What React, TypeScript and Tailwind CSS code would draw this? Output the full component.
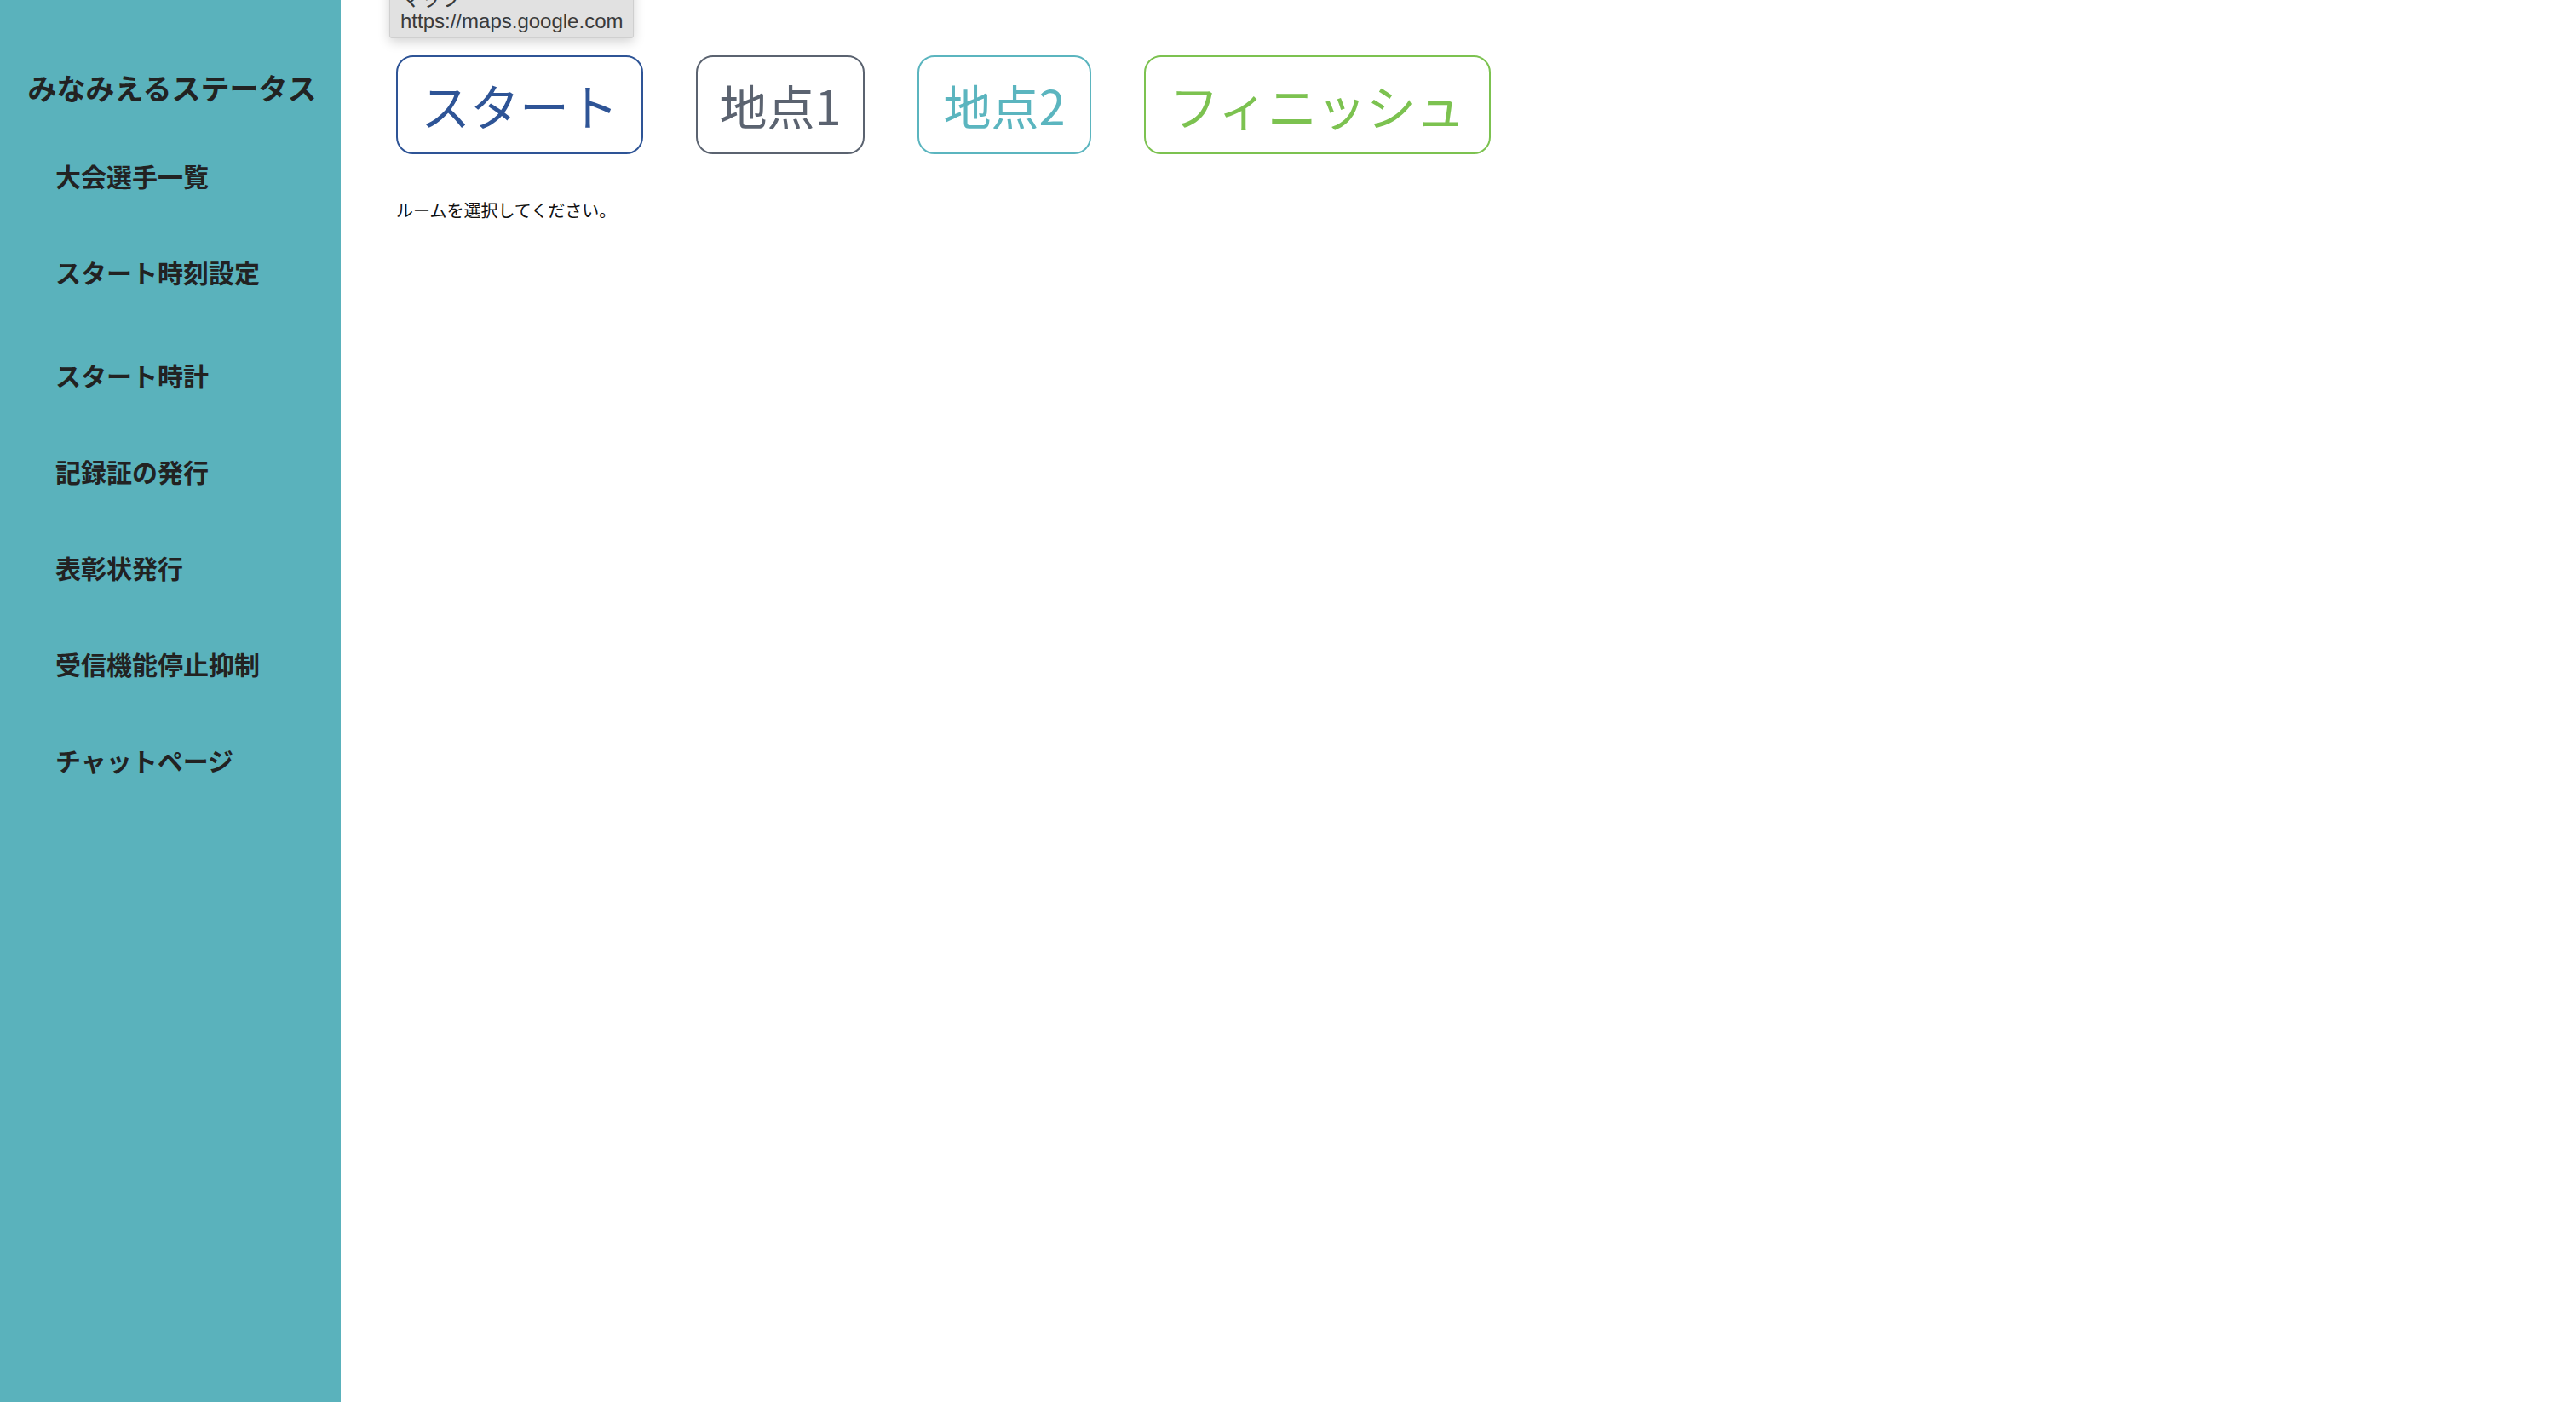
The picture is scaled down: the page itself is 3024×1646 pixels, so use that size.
import React from "react";

const navItems = [
  { label: "大会選手一覧", extra: "" },
  { label: "スタート時刻設定", extra: "" },
  { label: "スタート時計", extra: "mt-[8px]" },
  { label: "記録証の発行", extra: "" },
  { label: "表彰状発行", extra: "" },
  { label: "受信機能停止抑制", extra: "" },
  { label: "チャットページ", extra: "" },
];

const jp = "font-['Noto_Sans_CJK_JP','Noto_Sans',sans-serif]";

export default function App() {
  return (
    <div className={`relative flex min-h-screen w-full bg-white ${jp}`}>
      {/* Sidebar */}
      <aside className="w-[400px] shrink-0 bg-[#5ab2bc] text-[#222]">
        <h1 className="pt-[78px] text-center text-[34px] font-bold leading-[50px] pl-[4px]">
          みなみえるステータス
        </h1>
        <nav className="mt-[58px] flex flex-col gap-[73px] pl-[65px]">
          {navItems.map((item) => (
            <a
              key={item.label}
              className={`block text-[30px] font-bold leading-[40px] ${item.extra}`}
            >
              {item.label}
            </a>
          ))}
        </nav>
      </aside>

      {/* Main */}
      <main className="flex-1 pl-[65px] pt-[65px]">
        <div className="flex gap-[62px]">
          <button className="flex h-[116px] w-[290px] items-center justify-center rounded-[20px] border-2 border-[#2e5496] text-[58px] font-normal text-[#2e5496]">
            スタート
          </button>
          <button className="flex h-[116px] w-[198px] items-center justify-center rounded-[20px] border-2 border-[#5b6370] text-[56px] font-normal text-[#5b6370]">
            地点1
          </button>
          <button className="flex h-[116px] w-[204px] items-center justify-center rounded-[20px] border-2 border-[#5bb5bf] text-[56px] font-normal text-[#5bb5bf]">
            地点2
          </button>
          <button className="flex h-[116px] w-[407px] items-center justify-center rounded-[20px] border-2 border-[#7cc250] text-[58px] font-normal text-[#7cc250]">
            フィニッシュ
          </button>
        </div>
        <p className="mt-[52px] text-[20px] leading-[28px] text-[#111]">
          ルームを選択してください。
        </p>
      </main>

      {/* Link tooltip */}
      <div className="absolute left-[457px] top-[-22px] w-[287px] rounded-[3px] border border-[#cfcfcf] bg-[#e1e1e1] px-[12px] pb-[5px] pt-[4px] text-[24px] leading-[28px] text-[#3a3a3a] shadow-[0_4px_14px_rgba(0,0,0,0.18)]">
        <div className={jp}>マップ</div>
        <div className="font-['Liberation_Sans','Arial',sans-serif]">https://maps.google.com</div>
      </div>
    </div>
  );
}
